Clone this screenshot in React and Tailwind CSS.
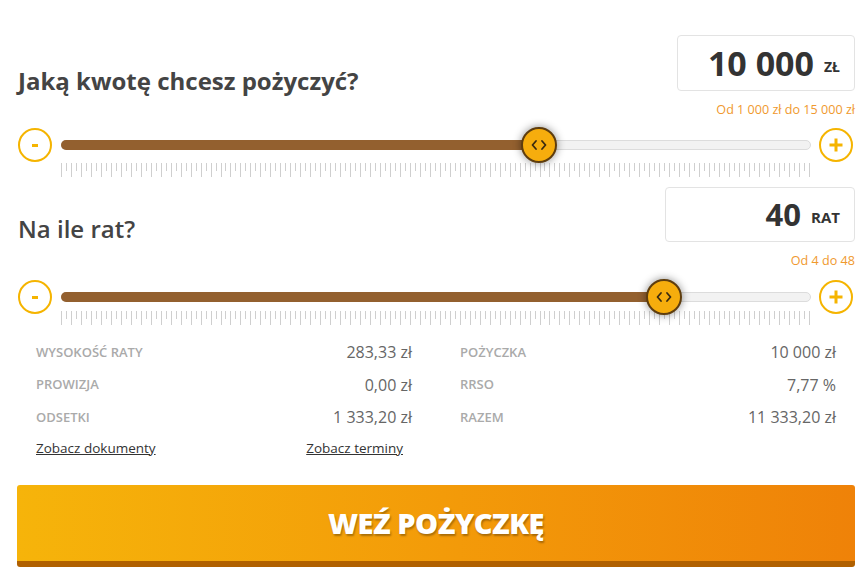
import { useState } from "react";

const ticks = Array.from({ length: 151 }, (_, i) => i);

function Ticks({ top }) {
  return (
    <div className={`ml-[44px] w-[750px] flex justify-between items-start ${top}`}>
      {ticks.map(i => (
        <div key={i} className={`w-px bg-[#cfcfcf] ${i % 2 === 0 ? "h-[14px]" : "h-[8px]"}`} />
      ))}
    </div>
  );
}

function Slider({ value, min, max }) {
  const pct = (value - min) / (max - min);
  const thumb = pct * (750 - 36) + 18;
  return (
    <div className="flex items-center">
      <div className="w-[34px] h-[34px] ml-px rounded-full border-2 border-[#f5b400] flex items-center justify-center">
        <div className="w-[6px] h-[3px] bg-[#f5b400]" />
      </div>
      <div className="relative ml-[9px] w-[750px] h-[10px] rounded-full bg-[#f2f2f2] border border-[#dcdcdc]">
        <div className="absolute -left-px -top-px h-[10px] rounded-full bg-[#93602f]" style={{ width: thumb }} />
        <div
          className="absolute top-1/2 -translate-y-1/2 -translate-x-1/2 w-[36px] h-[36px] rounded-full bg-[#f6ad0d] border-2 border-[#5e3d0e] shadow-[0_0_8px_rgba(0,0,0,0.45)] flex items-center justify-center"
          style={{ left: thumb }}
        >
          <svg width="16" height="12" viewBox="0 0 16 12" fill="none" stroke="#3a2a10" strokeWidth="1.8" strokeLinecap="round" strokeLinejoin="round">
            <path d="M5 2 L1.5 6 L5 10" />
            <path d="M11 2 L14.5 6 L11 10" />
          </svg>
        </div>
      </div>
      <div className="ml-[8px] w-[34px] h-[34px] rounded-full border-2 border-[#f5b400] flex items-center justify-center">
        <svg width="16" height="16" viewBox="0 0 16 16">
          <rect x="6.5" y="1.5" width="3" height="13" fill="#f5b400" />
          <rect x="1.5" y="6.5" width="13" height="3" fill="#f5b400" />
        </svg>
      </div>
    </div>
  );
}

function Stat({ label, value }) {
  return (
    <div className="flex justify-between items-center h-[32.5px]">
      <span className="text-[13px] font-semibold text-[#aaaaaa] uppercase">{label}</span>
      <span className="text-[16px] text-[#666]">{value}</span>
    </div>
  );
}

export default function App() {
  const [amount] = useState(10000);
  const [rates] = useState(40);

  return (
    <div className="w-[863px] h-[577px] bg-white overflow-hidden pl-[17px] pr-[8px]" style={{ fontFamily: '"Open Sans", "Noto Sans", sans-serif' }}>
      <div className="flex justify-between items-end pt-[35px]">
        <h1 className="text-[24px] font-bold text-[#444] leading-none mb-[-2px] ml-px">Jaką kwotę chcesz pożyczyć?</h1>
        <div className="w-[178px] h-[56px] border border-[#e3e3e3] rounded-[4px] flex items-center justify-end pr-[14px]">
          <span className="text-[34px] font-bold text-[#333] leading-none">10 000</span>
          <span className="text-[14px] font-bold text-[#333] ml-[10px] mt-[6px]">ZŁ</span>
        </div>
      </div>
      <div className="text-right text-[12.6px] leading-[14px] text-[#f0992e] mt-[12px]">Od 1 000 zł do 15 000 zł</div>
      <div className="mt-[11px]">
        <Slider value={amount} min={1000} max={15000} />
      </div>
      <Ticks top="mt-[1px]" />

      <div className="flex justify-between items-end mt-[10px]">
        <h2 className="text-[24px] font-semibold text-[#444] leading-none mb-[1px] ml-px">Na ile rat?</h2>
        <div className="w-[190px] h-[55px] border border-[#e3e3e3] rounded-[4px] flex items-center justify-end pr-[14px]">
          <span className="text-[31px] font-bold text-[#333] leading-none">40</span>
          <span className="text-[15px] font-bold text-[#333] ml-[10px] mt-[5px]">RAT</span>
        </div>
      </div>
      <div className="text-right text-[12.6px] leading-[14px] text-[#f0992e] mt-[12px]">Od 4 do 48</div>
      <div className="mt-[12px]">
        <Slider value={rates} min={4} max={48} />
      </div>
      <Ticks top="-mt-[3px]" />

      <div className="ml-[19px] mr-[19px] mt-[11px] grid grid-cols-2 gap-x-[48px]">
        <div>
          <Stat label="Wysokość raty" value="283,33 zł" />
          <Stat label="Prowizja" value="0,00 zł" />
          <Stat label="Odsetki" value="1 333,20 zł" />
          <div className="flex justify-between pr-[9px] mt-[4px] text-[13.5px] text-[#333]">
            <a href="#" className="underline">Zobacz dokumenty</a>
            <a href="#" className="underline">Zobacz terminy</a>
          </div>
        </div>
        <div>
          <Stat label="Pożyczka" value="10 000 zł" />
          <Stat label="RRSO" value="7,77 %" />
          <Stat label="Razem" value="11 333,20 zł" />
        </div>
      </div>

      <button className="block mt-[27px] w-[838px] h-[82px] rounded-[3px] bg-gradient-to-r from-[#f6b40a] to-[#ef8208] border-b-[6px] border-[#b06000] flex items-center justify-center">
        <span className="text-white text-[29px] font-extrabold tracking-[-0.5px] [text-shadow:1px_2px_2px_rgba(0,0,0,0.3)]">WEŹ POŻYCZKĘ</span>
      </button>
    </div>
  );
}
